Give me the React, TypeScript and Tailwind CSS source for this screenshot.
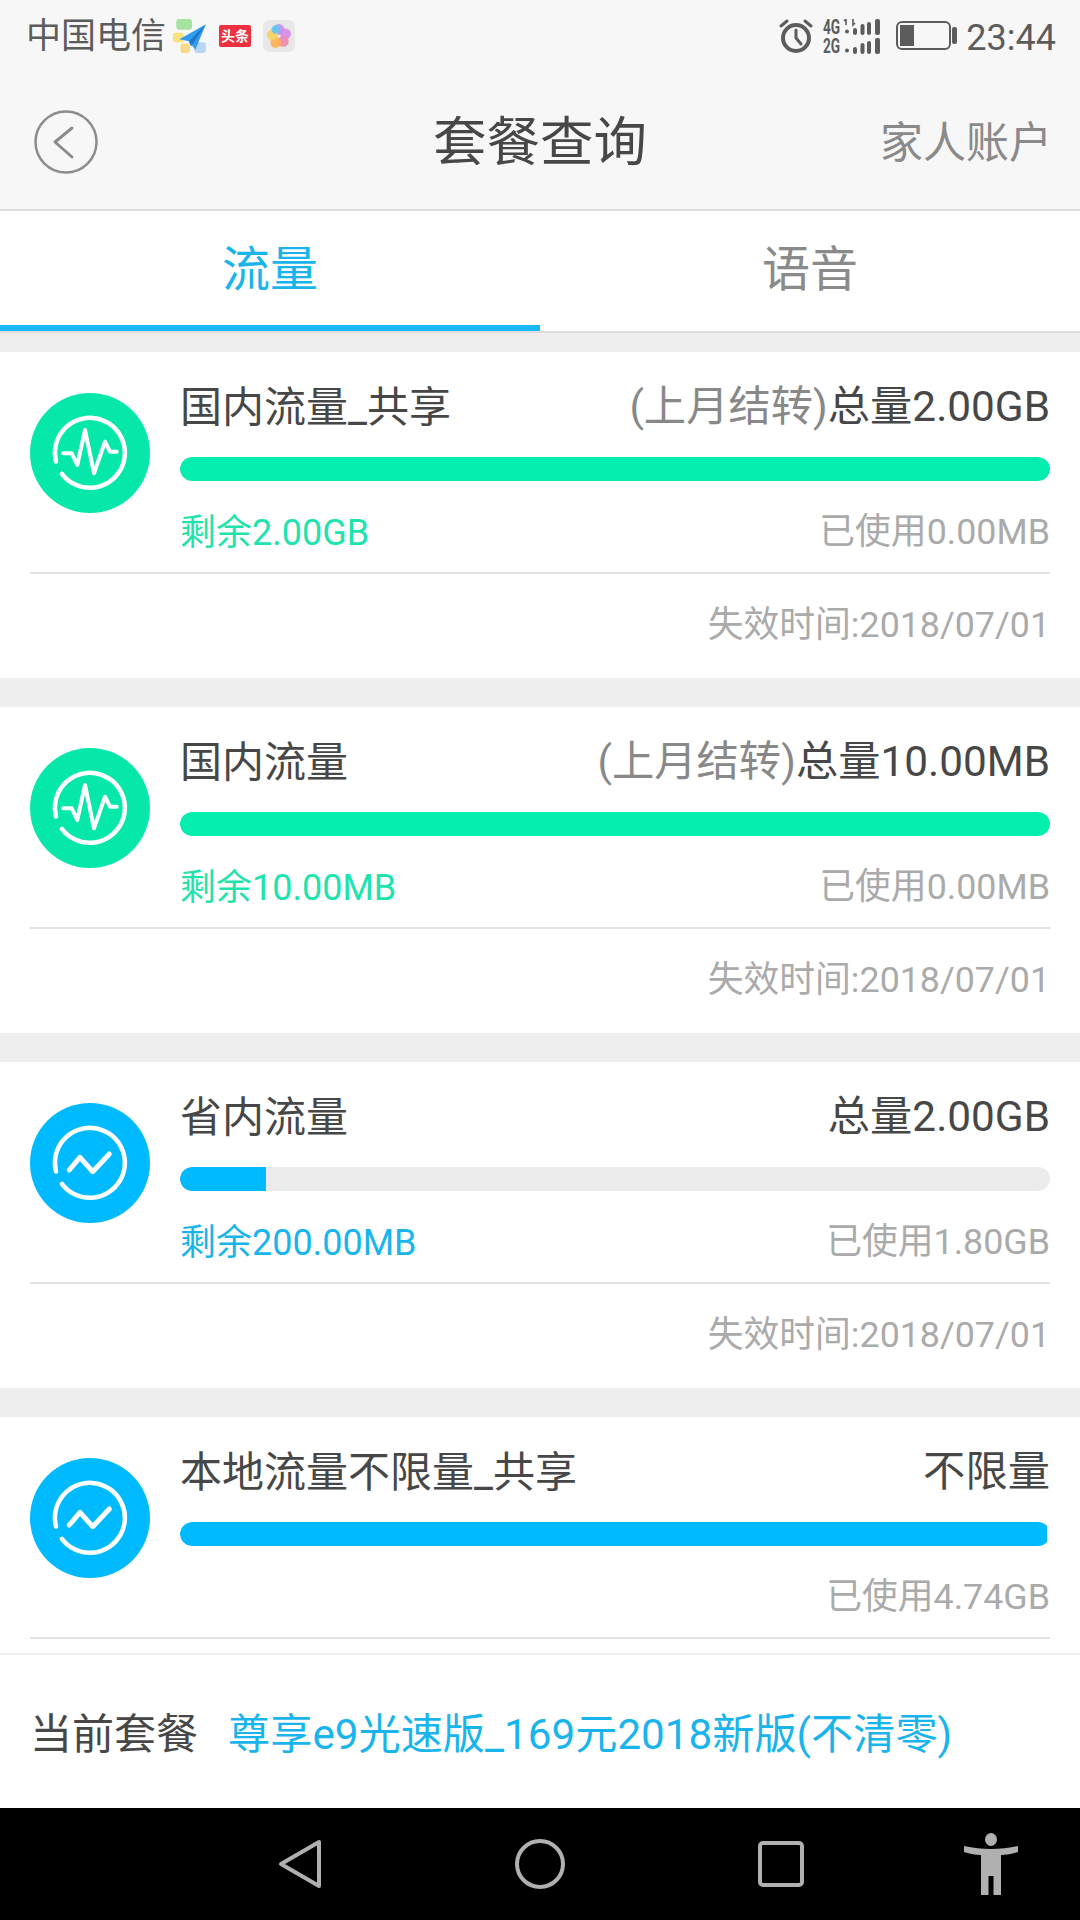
const GREEN = { bar: "bg-[#02edae]", circle: "bg-[#05e8aa]", text: "text-[#1fe3ad]" };
const BLUE = { bar: "bg-[#00baff]", circle: "bg-[#00baff]", text: "text-[#1ab4ec]" };

const PulseIcon = () => (
  <svg viewBox="0 0 120 120" className="w-[120px] h-[120px]" fill="none" stroke="#fff" strokeLinecap="round" strokeLinejoin="round">
    <path d="M31.9 80.8A35 35 0 1 0 26 68.5" strokeWidth="4.5" />
    <path d="M33.3 60.3H41.7L47.3 72L55 37L64 80.3L75 48.7L80 58.7H86.7" strokeWidth="4" />
  </svg>
);

const TrendIcon = () => (
  <svg viewBox="0 0 120 120" className="w-[120px] h-[120px]" fill="none" stroke="#fff" strokeLinecap="round" strokeLinejoin="round">
    <path d="M31.9 80.8A35 35 0 1 0 26 68.5" strokeWidth="4.5" />
    <path d="M39.3 67L50 54.3L62.7 68.7L79.3 51" strokeWidth="5" />
  </svg>
);

const AlarmIcon = () => (
  <svg viewBox="0 0 34 36" className="w-[34px] h-[36px]" fill="none" stroke="#5c5c5c" strokeLinecap="round">
    <circle cx="17" cy="20" r="13" strokeWidth="4" />
    <path d="M17 12V20L22 26" strokeWidth="3" />
    <path d="M2 8L8 3M32 8L26 3" strokeWidth="3" />
  </svg>
);

const SignalBars = ({ arrows }: { arrows?: boolean }) => (
  <svg viewBox="0 0 37 16" className="w-[37px] h-[16px]" fill="#5c5c5c">
    {arrows && <path d="M3 6V0L1 2M10 0V6L12 4" stroke="#5c5c5c" strokeWidth="1.6" fill="none" />}
    <circle cx="4" cy="12.5" r="2" />
    <rect x="10" y="9" width="4" height="7" rx="2" />
    <rect x="17.5" y="5" width="4" height="11" rx="2" />
    <rect x="24" y="3" width="4" height="13" rx="2" />
    <rect x="32" y="0" width="5" height="16" rx="2" />
  </svg>
);

const SignalIcon = () => (
  <div className="w-[57px] flex flex-col gap-[3px] text-[21px] font-bold leading-[16px]">
    <div className="flex justify-between h-[16px]">
      <span className="inline-block w-[20px] scale-x-[0.65] origin-left">4G</span>
      <SignalBars arrows />
    </div>
    <div className="flex justify-between h-[16px]">
      <span className="inline-block w-[20px] scale-x-[0.65] origin-left">2G</span>
      <SignalBars />
    </div>
  </div>
);

const BatteryIcon = () => (
  <svg viewBox="0 0 62 30" className="w-[62px] h-[30px]" fill="none">
    <rect x="1" y="1" width="53" height="27" rx="5" stroke="#5c5c5c" strokeWidth="2" />
    <rect x="4" y="4" width="14" height="21" fill="#5c5c5c" />
    <rect x="56" y="6" width="5" height="17" rx="2" fill="#5c5c5c" />
  </svg>
);

const PlaneIcon = () => (
  <svg viewBox="0 0 32 34" className="w-[34px] h-[36px]">
    <rect x="3" y="1" width="15" height="10" rx="3" fill="#a6e3a1" />
    <rect x="0" y="14" width="10" height="9" rx="2" fill="#f7e27c" />
    <rect x="7" y="24" width="9" height="9" rx="2" fill="#f8d98a" />
    <rect x="20" y="23" width="11" height="10" rx="3" fill="#b5d6f5" />
    <path d="M31 6L6 20L15 22L21 30Z" fill="#2f9cf0" />
    <path d="M31 6L15 22L17 27Z" fill="#1c78c8" />
  </svg>
);

const BlossomIcon = () => (
  <div className="w-[32px] h-[32px] rounded-[6px] bg-[#e8e8e8] flex items-center justify-center">
    <svg viewBox="0 0 24 24" className="w-[26px] h-[26px]">
      <circle cx="12" cy="6" r="5" fill="#c49af0" />
      <circle cx="18" cy="10" r="5" fill="#d88ae8" opacity="0.9" />
      <circle cx="16" cy="17" r="5" fill="#f08ab0" opacity="0.9" />
      <circle cx="9" cy="18" r="5" fill="#ffb050" opacity="0.9" />
      <circle cx="6" cy="11" r="5" fill="#f8d060" opacity="0.9" />
      <circle cx="9" cy="6" r="4" fill="#60c8f0" opacity="0.9" />
    </svg>
  </div>
);

const PersonIcon = () => (
  <svg viewBox="0 0 54 62" className="w-[54px] h-[62px]" fill="#b0b0b0">
    <ellipse cx="27" cy="6.5" rx="6" ry="6.5" />
    <path d="M0 13C9 15 18 16 27 16C36 16 45 15 54 13L54 19C48 21 42 22 37 22V62H29.5V43H24.5V62H17V22C12 22 6 21 0 19Z" />
  </svg>
);

type Plan = {
  icon: "pulse" | "trend";
  title: string;
  note?: string;
  total: string;
  percent: number;
  left?: string;
  used: string;
  expires?: string;
};

const plans: Plan[] = [
  { icon: "pulse", title: "国内流量_共享", note: "(上月结转)", total: "总量2.00GB", percent: 100, left: "剩余2.00GB", used: "已使用0.00MB", expires: "失效时间:2018/07/01" },
  { icon: "pulse", title: "国内流量", note: "(上月结转)", total: "总量10.00MB", percent: 100, left: "剩余10.00MB", used: "已使用0.00MB", expires: "失效时间:2018/07/01" },
  { icon: "trend", title: "省内流量", total: "总量2.00GB", percent: 9.9, left: "剩余200.00MB", used: "已使用1.80GB", expires: "失效时间:2018/07/01" },
  { icon: "trend", title: "本地流量不限量_共享", total: "不限量", percent: 99.65, used: "已使用4.74GB" },
];

const PlanCard = ({ plan }: { plan: Plan }) => {
  const tone = plan.icon === "pulse" ? GREEN : BLUE;
  // the unlimited plan has no left value and its bar sits on no track
  const unlimited = !plan.left;
  return (
    <div className="bg-white px-[30px] last:flex-1">
      <div className="flex h-[222px] border-b-2 border-[#e2e2e2]">
        <div className={`mt-[41px] w-[120px] h-[120px] rounded-full shrink-0 ${tone.circle}`}>
          {plan.icon === "pulse" ? <PulseIcon /> : <TrendIcon />}
        </div>
        <div className="flex-1 ml-[30px] pt-[30px]">
          <div className="flex justify-between items-center h-[50px] text-[42px] text-[#474747]">
            <span>{plan.title}</span>
            <span className="text-[42.3px]">
              {plan.note && <span className="text-[#888888]">{plan.note}</span>}
              {plan.total}
            </span>
          </div>
          <div className={`mt-[25px] h-[24px] rounded-full overflow-hidden ${unlimited ? "" : "bg-[#ebebeb]"}`}>
            <div
              className={`h-full ${tone.bar} ${plan.percent === 100 ? "rounded-full" : "rounded-l-full"} ${unlimited ? "rounded-r-[6px]" : ""}`}
              style={{ width: `${plan.percent}%` }}
            />
          </div>
          <div className="mt-[29px] flex justify-between items-center h-[46px] text-[36px]">
            <span className={tone.text}>{plan.left}</span>
            <span className="text-[35.8px] text-[#aaaaaa]">{plan.used}</span>
          </div>
        </div>
      </div>
      {plan.expires && (
        <div className="h-[104px] flex items-center justify-end text-[35.8px] text-[#aaaaaa]">{plan.expires}</div>
      )}
    </div>
  );
};

const App = () => {
  return (
    <div className="w-[1080px] h-[1920px] overflow-hidden flex flex-col bg-[#eeeeee] font-['Roboto','Noto_Sans_CJK_SC',sans-serif]">
      {/* Status bar */}
      <div className="h-[72px] bg-[#f7f7f7] flex items-center pl-[26px] pr-[24px] text-[#5c5c5c]">
        <span className="text-[35px] pt-[3px]">中国电信</span>
        <div className="ml-[7px]"><PlaneIcon /></div>
        <div className="ml-[12px] w-[32px] h-[22px] bg-[#ee3040] rounded-[2px] flex items-center justify-center text-white text-[14px] font-bold leading-none">头条</div>
        <div className="ml-[12px]"><BlossomIcon /></div>
        <div className="ml-auto flex items-center">
          <AlarmIcon />
          <div className="ml-[10px]"><SignalIcon /></div>
          <div className="ml-[16px]"><BatteryIcon /></div>
          <span className="ml-[8px] text-[36px] pt-[3px]">23:44</span>
        </div>
      </div>

      {/* Header */}
      <div className="h-[139px] bg-[#f7f7f7] border-b-2 border-[#dddddd] grid grid-cols-[1fr_auto_1fr] items-center px-[28px]">
        <svg viewBox="0 0 64 64" className="w-[64px] h-[64px] mt-[2px] ml-[6px]" fill="none" stroke="#8c8c8c" strokeWidth="2.5" strokeLinecap="round" strokeLinejoin="round">
          <circle cx="32" cy="32" r="30.5" />
          <path d="M38 18L21 32L38 47" strokeWidth="3" />
        </svg>
        <span className="text-[53.5px] pt-[6px] text-[#474747]">套餐查询</span>
        <span className="text-[43px] pt-[6px] text-[#8a8a8a] text-right">家人账户</span>
      </div>

      {/* Tabs */}
      <div className="flex h-[122px] bg-white border-b-2 border-[#dddddd]">
        <div className="flex-1 flex items-center justify-center pt-[4px] border-b-[6px] border-[#1ab8f5] text-[48px] text-[#1ab4ec]">流量</div>
        <div className="flex-1 flex items-center justify-center pt-[4px] pb-[6px] text-[48px] text-[#8a8a8a]">语音</div>
      </div>

      {/* Plans */}
      <div className="flex-1 min-h-0 overflow-hidden mt-[19px] flex flex-col gap-[29px]">
        {plans.map((plan) => (
          <PlanCard key={plan.title} plan={plan} />
        ))}
      </div>

      {/* Current package */}
      <div className="h-[155px] bg-white border-t-2 border-[#eeeeee] flex items-center pl-[30px] pt-[6px] text-[42px] shrink-0">
        <span className="text-[#474747]">当前套餐</span>
        <span className="ml-[30px] text-[42.2px] text-[#1ab4ec]">尊享e9光速版_169元2018新版(不清零)</span>
      </div>

      {/* Navigation bar */}
      <div className="h-[112px] bg-black shrink-0 flex items-center pl-[278px]">
        <svg viewBox="0 0 44 50" className="w-[44px] h-[50px]" fill="none" stroke="#b0b0b0" strokeWidth="4" strokeLinejoin="round">
          <path d="M41 3V47L3 25Z" />
        </svg>
        <svg viewBox="0 0 50 50" className="ml-[193px] w-[50px] h-[50px]" fill="none" stroke="#b0b0b0" strokeWidth="4">
          <circle cx="25" cy="25" r="23" />
        </svg>
        <svg viewBox="0 0 46 46" className="ml-[193px] w-[46px] h-[46px]" fill="none" stroke="#b0b0b0" strokeWidth="4">
          <rect x="2" y="2" width="42" height="42" rx="3" />
        </svg>
        <div className="ml-[160px]"><PersonIcon /></div>
      </div>
    </div>
  );
};

export default App;
